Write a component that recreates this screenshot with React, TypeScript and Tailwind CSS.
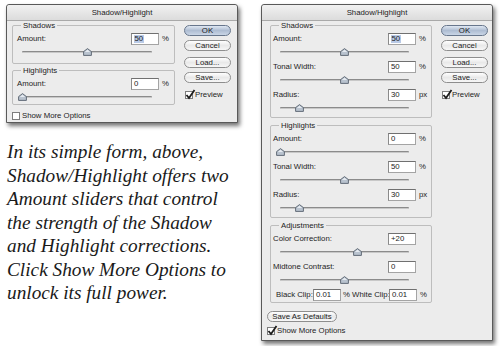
import React from "react";

const ui = "font-['Liberation_Sans',Arial,sans-serif] text-[7.8px] leading-none text-[#1c1c1c] whitespace-nowrap";

function Thumb() {
  return (
    <svg width="9" height="8" viewBox="0 0 9 8">
      <path d="M4.5 0.6 L8.4 3.6 L8.4 7.4 L0.6 7.4 L0.6 3.6 Z" fill="#b9c3cf" stroke="#56606c" strokeWidth="0.9" />
      <path d="M4.5 1.8 L7.2 3.9 L1.8 3.9 Z" fill="#e6ebf1" />
    </svg>
  );
}

function Slider({ pct, tall = true }: { pct: number; tall?: boolean }) {
  return (
    <div className={tall ? "relative h-[16px] ml-[9px] mr-[22px]" : "relative h-[14px] ml-[9px] mr-[22px]"}>
      <div className="absolute left-0 right-0 top-[6px] h-[2px] rounded-full bg-[#8b8b8b] border-b border-[#c8c8c8]" />
      <div className="absolute top-[3px] -ml-[4.5px] flex" style={{ left: `${pct}%` }}>
        <Thumb />
      </div>
    </div>
  );
}

function Field({ value, selected }: { value: string; selected?: boolean }) {
  return (
    <div className="w-[28px] shrink-0 h-[12px] flex items-center bg-white border border-[#a4a4a4] border-t-[#707070] border-l-[#8a8a8a] pl-[2px]">
      {selected ? <span className="bg-[#b9cae6] px-[0.5px]">{value}</span> : <span>{value}</span>}
    </div>
  );
}

function Row({ label, value, unit, selected, pl }: { label: string; value: string; unit: string; selected?: boolean; pl: string }) {
  return (
    <div className={`flex items-center h-[12px] ${pl}`}>
      <span className="flex-1">{label}</span>
      <Field value={value} selected={selected} />
      <span className="w-[15px] shrink-0 pl-[3px]">{unit}</span>
    </div>
  );
}

function Group({ title, className, children }: { title: string; className: string; children: React.ReactNode }) {
  return (
    <div className={`relative border border-[#bdbdbd] rounded-[2px] pt-[7px] ${className}`}>
      <span className="absolute -top-[4px] left-[8px] bg-[#ececec] px-[2px]">{title}</span>
      {children}
    </div>
  );
}

function Button({ label, primary, className = "w-[47px]" }: { label: string; primary?: boolean; className?: string }) {
  return (
    <div
      className={
        primary
          ? `${className} h-[11px] rounded-full border border-[#67768c] bg-gradient-to-b from-[#dfe7f2] via-[#aebdd2] to-[#c9d5e6] flex items-center justify-center`
          : `${className} h-[11px] rounded-full border border-[#8e8e8e] bg-gradient-to-b from-white via-[#e9e9e9] to-[#f7f7f7] flex items-center justify-center`
      }
    >
      {label}
    </div>
  );
}

function Check({ on }: { on?: boolean }) {
  return (
    <div className="relative w-[8px] h-[8px] bg-white border border-[#7d7d7d] shrink-0">
      {on && (
        <svg className="absolute -top-[3px] -left-[1px]" width="11" height="11" viewBox="0 0 11 11">
          <path d="M1.5 6 L4 9 L9.5 1" fill="none" stroke="#1e1e1e" strokeWidth="1.8" />
        </svg>
      )}
    </div>
  );
}

function Buttons() {
  return (
    <div className="flex flex-col pt-[4px] w-[47px]">
      <Button label="OK" primary />
      <div className="mt-[4px]"><Button label="Cancel" /></div>
      <div className="mt-[6px]"><Button label="Load..." /></div>
      <div className="mt-[4px]"><Button label="Save..." /></div>
      <div className="mt-[8px] flex items-center gap-[2px] pl-[1px]">
        <Check on />
        <span>Preview</span>
      </div>
    </div>
  );
}

function Dialog({ className, children }: { className: string; children: React.ReactNode }) {
  return (
    <div className={`${className} w-[232px] shrink-0 border border-[#595959] rounded-t-[3px] bg-[#ececec] shadow-[2px_3px_4px_rgba(0,0,0,0.55)] ${ui}`}>
      <div className="h-[16px] border-b border-[#a9a9a9] rounded-t-[3px] bg-gradient-to-b from-[#f1f1f1] to-[#dcdcdc] flex items-center justify-center">
        Shadow/Highlight
      </div>
      {children}
    </div>
  );
}

export default function App() {
  return (
    <div className="w-[500px] h-[346px] bg-white flex pl-[6px] pt-[4px] gap-[23px] overflow-hidden">
      <div className="flex flex-col w-[232px] shrink-0">
        <Dialog className="h-[119px]">
          <div className="flex pl-[5px] pr-[6px]">
            <div className="w-[163px] pt-[4px] flex flex-col">
              <Group title="Shadows" className="pb-[4px]">
                <Row label="Amount:" value="50" unit="%" selected pl="pl-[4px]" />
                <Slider pct={50} tall={false} />
              </Group>
              <Group title="Highlights" className="mt-[6px]">
                <Row label="Amount:" value="0" unit="%" pl="pl-[4px]" />
                <Slider pct={0} tall={false} />
              </Group>
              <div className="mt-[6px] flex items-center gap-[2px] h-[9px]">
                <Check />
                <span>Show More Options</span>
              </div>
            </div>
            <div className="ml-[9px]">
              <Buttons />
            </div>
          </div>
        </Dialog>
        <p className="mt-[17px] ml-[1px] font-['Liberation_Serif','Times_New_Roman',serif] italic text-[19.3px] leading-[23.5px] text-[#1a1a1a] whitespace-nowrap">
          In its simple form, above,
          <br />
          Shadow/Highlight offers two
          <br />
          Amount sliders that control
          <br />
          the strength of the Shadow
          <br />
          and Highlight corrections.
          <br />
          Click Show More Options to
          <br />
          unlock its full power.
        </p>
      </div>

      <Dialog className="h-[337px]">
        <div className="flex pl-[8px] pr-[4px]">
          <div className="w-[162px] pt-[4px] flex flex-col">
            <Group title="Shadows" className="">
              <Row label="Amount:" value="50" unit="%" selected pl="pl-[2px]" />
              <Slider pct={50} />
              <Row label="Tonal Width:" value="50" unit="%" pl="pl-[2px]" />
              <Slider pct={50} />
              <Row label="Radius:" value="30" unit="px" pl="pl-[2px]" />
              <Slider pct={15} />
            </Group>
            <Group title="Highlights" className="mt-[7px]">
              <Row label="Amount:" value="0" unit="%" pl="pl-[2px]" />
              <Slider pct={0} />
              <Row label="Tonal Width:" value="50" unit="%" pl="pl-[2px]" />
              <Slider pct={50} />
              <Row label="Radius:" value="30" unit="px" pl="pl-[2px]" />
              <Slider pct={15} />
            </Group>
            <Group title="Adjustments" className="mt-[7px] pb-[1px]">
              <Row label="Color Correction:" value="+20" unit="" pl="pl-[2px]" />
              <Slider pct={60} />
              <Row label="Midtone Contrast:" value="0" unit="" pl="pl-[2px]" />
              <Slider pct={50} />
              <div className="flex items-center h-[12px] pl-[5px]">
                <span className="w-[37px] shrink-0">Black Clip:</span>
                <Field value="0.01" />
                <span className="w-[48px] shrink-0 pl-[2px]">% White Clip:</span>
                <Field value="0.01" />
                <span className="pl-[3px]">%</span>
              </div>
            </Group>
            <div className="mt-[8px] -ml-[3px]">
              <Button label="Save As Defaults" className="w-[70px]" />
            </div>
            <div className="mt-[4px] -ml-[3px] flex items-center gap-[2px] h-[9px]">
              <Check on />
              <span>Show More Options</span>
            </div>
          </div>
          <div className="ml-[9px]">
            <Buttons />
          </div>
        </div>
      </Dialog>
    </div>
  );
}
